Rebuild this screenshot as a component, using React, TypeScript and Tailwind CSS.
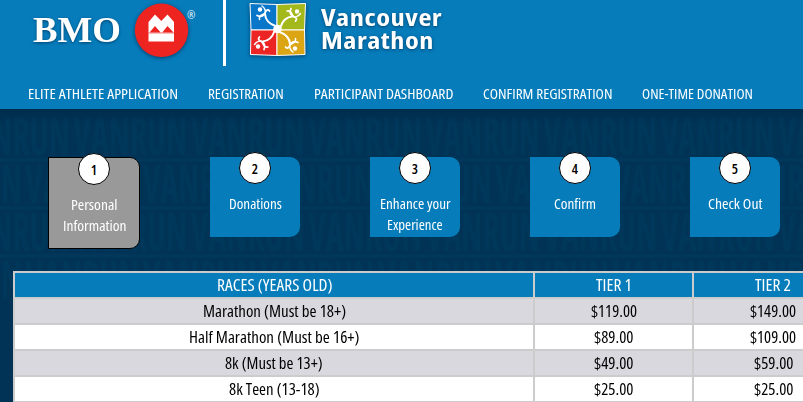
import { useLayoutEffect, useRef, useState } from "react";

/* Single line of text, stretched horizontally to a given width. */
function Fit({ text, w }: { text: string; w: number }) {
  const ref = useRef<HTMLSpanElement>(null);
  const [scale, setScale] = useState(1);
  useLayoutEffect(() => {
    if (ref.current) setScale(w / ref.current.offsetWidth);
  }, [w, text]);
  return (
    <span className="inline-block text-left whitespace-nowrap" style={{ width: w }}>
      <span ref={ref} className="inline-block w-max origin-left" style={{ transform: `scaleX(${scale})` }}>
        {text}
      </span>
    </span>
  );
}

const nav: [string, number][] = [
  ["ELITE ATHLETE APPLICATION", 150],
  ["REGISTRATION", 76],
  ["PARTICIPANT DASHBOARD", 139],
  ["CONFIRM REGISTRATION", 129],
  ["ONE-TIME DONATION", 111],
];

const steps: [string, number][][] = [
  [["Personal", 46], ["Information", 63]],
  [["Donations", 53]],
  [["Enhance your", 71], ["Experience", 56]],
  [["Confirm", 42]],
  [["Check Out", 54]],
];

const races: [string, number, string, number, string, number][] = [
  ["Marathon (Must be 18+)", 143, "$119.00", 46, "$149.00", 46],
  ["Half Marathon (Must be 16+)", 171, "$89.00", 39, "$109.00", 46],
  ["8k (Must be 13+)", 98, "$49.00", 39, "$59.00", 39],
  ["8k Teen (13-18)", 91, "$25.00", 39, "$25.00", 39],
];

function Runner({ transform }: { transform: string }) {
  return (
    <g transform={transform} fill="none" stroke="#fff" strokeLinecap="round" strokeLinejoin="round">
      <circle cx="-17.500" cy="-19.500" r="2.200" fill="#fff" stroke="none" />
      <path d="M-2 -3C-8 -5 -12 -8 -12.500 -15" strokeWidth="2" />
      <path d="M-20.500 -13.500C-17 -12 -14 -13 -12.500 -16C-11.500 -19 -9.500 -20 -8 -18" strokeWidth="1.700" />
      <path d="M-18 -9.500C-19 -14 -15 -14 -13 -15.500C-11 -17 -12.500 -21 -15.500 -23" strokeWidth="1.500" />
    </g>
  );
}

function Logo() {
  return (
    <svg width="62" height="60" viewBox="0 0 62 60" className="drop-shadow-[0_1px_2px_#00406a]">
      <path d="M3 3.500L30 4.500V30H4z" fill="#0876c9" stroke="#fff" strokeWidth="1" />
      <path d="M30 4.500L58.500 3.500L57.500 30H30z" fill="#a3b81b" stroke="#fff" strokeWidth="1" />
      <path d="M4 30H30V55.500L3.500 54.500z" fill="#ec2524" stroke="#fff" strokeWidth="1" />
      <path d="M30 30H57.500L58 54.500L30 55.500z" fill="#dba514" stroke="#fff" strokeWidth="1" />
      <Runner transform="translate(30.500 29)" />
      <Runner transform="translate(30.500 29) rotate(90)" />
      <Runner transform="translate(30.500 29) rotate(180)" />
      <Runner transform="translate(30.500 29) rotate(270)" />
      <circle cx="30.500" cy="29" r="4.300" fill="#fff" />
    </svg>
  );
}

function Backdrop() {
  return (
    <svg width="803" height="293" className="absolute inset-0" aria-hidden="true">
      <defs>
        <linearGradient id="shade" x1="0" x2="0" y1="0" y2="1">
          <stop offset="0" stopColor="#002c4c" />
          <stop offset="1" stopColor="#002c4c" stopOpacity="0" />
        </linearGradient>
      </defs>
      {[0, 1, 2, 3].map((r) => (
        <g key={r} transform={`translate(0 ${r * 48})`}>
          <rect y="1" width="803" height="4" fill="#003a5d" opacity="0.6" />
          {[0, 1, 2, 3, 4, 5, 6, 7].map((c) => (
            <text
              key={c}
              x={c * 117.5 - 44 - (r % 2) * 48}
              y="46"
              textLength="114"
              lengthAdjust="spacingAndGlyphs"
              fill="#00385b"
              className="font-['Open_Sans'] text-[54px] font-bold [font-stretch:75%]"
            >
              VANRUN
            </text>
          ))}
        </g>
      ))}
      <rect width="803" height="14" fill="url(#shade)" />
    </svg>
  );
}

export default function App() {
  return (
    <div className="h-[402px] w-[803px] overflow-hidden bg-[#003355] font-['Open_Sans',sans-serif] [font-stretch:75%]">
      <header className="h-[109px] bg-[#067cbb] text-white">
        <div className="flex h-[84px] items-start">
          <div className="ml-[33px] w-[89px] pt-[9px] font-['Liberation_Serif',serif] text-[36px] leading-[42px] font-bold [text-shadow:0_1px_3px_#00406a]">
            <Fit text="BMO" w={88} />
          </div>
          <svg width="62" height="62" viewBox="0 0 62 62" className="ml-[10px] drop-shadow-[0_1px_2px_#00406a]">
            <circle cx="29.500" cy="30.300" r="26.700" fill="#ee2420" />
            <path d="M16.500 41.500V22L23 14.500L29.300 21L35.500 14.500L42 22V41.500Z" fill="#fff" />
            <path d="M17.500 32.500L23 26L28.700 32.500ZM30.300 32.500L35.500 26L41.500 32.500Z" fill="#ee2420" />
            <path d="M16.500 33H42" stroke="#ee2420" strokeWidth=".6" />
          </svg>
          <span className="-ml-[7px] w-2 pt-[9px] text-[10px] leading-3">®</span>
          <div className="ml-[28px] h-[66px] w-[3px] bg-white" />
          <div className="ml-[21px] w-[62px]">
            <Logo />
          </div>
          <div className="ml-[12px] flex w-[124px] flex-col items-start pt-[6px] text-[22.500px] leading-[23px] font-bold tracking-[0.4px] [text-shadow:0_1px_3px_#00406a]">
            <Fit text="Vancouver" w={121} />
            <Fit text="Marathon" w={113} />
          </div>
        </div>
        <nav className="ml-7 flex gap-[30px] text-[14.500px] leading-5 font-medium">
          {nav.map(([t, w]) => (
            <Fit key={t} text={t} w={w} />
          ))}
        </nav>
      </header>
      <main className="relative h-[293px] overflow-hidden">
        <Backdrop />
        <div className="relative ml-12 flex items-start gap-[70px] pt-12">
          {steps.map((lines, i) => (
            <div
              key={i}
              className={
                i === 0
                  ? "relative h-[92px] w-[92px] shrink-0 rounded-r-[10px] border border-black bg-[#999] pt-[36px]"
                  : "relative h-20 w-[90px] shrink-0 rounded-r-[10px] bg-[#067cbb] pt-[36px]"
              }
            >
              <div className="absolute -top-[5px] left-[29px] flex h-8 w-8 items-center justify-center rounded-full border border-black bg-white text-[14px] font-semibold text-black">
                {i + 1}
              </div>
              <div className="flex flex-col items-center text-[14.500px] leading-[21px] font-medium text-white">
                {lines.map(([t, w]) => (
                  <Fit key={t} text={t} w={w} />
                ))}
              </div>
            </div>
          ))}
        </div>
        <div className="relative mt-[22px] ml-[13px] grid w-[841px] grid-cols-[518px_157px_158px] gap-[2px] border-2 border-[#ccc] bg-[#ccc] text-center text-[15.500px] leading-6">
          {[["RACES (YEARS OLD)", 115], ["TIER 1", 36], ["TIER 2", 36]].map(([t, w]) => (
            <div key={t} className="h-6 bg-[#067cbb] font-medium text-white">
              <Fit text={String(t)} w={Number(w)} />
            </div>
          ))}
          {races.map((r, i) =>
            [0, 2, 4].map((c) => (
              <div key={`${i}-${c}`} className={i % 2 ? "h-6 bg-white text-black" : "h-6 bg-[#d9d8df] text-black"}>
                <Fit text={String(r[c])} w={Number(r[c + 1])} />
              </div>
            )),
          )}
        </div>
      </main>
    </div>
  );
}
